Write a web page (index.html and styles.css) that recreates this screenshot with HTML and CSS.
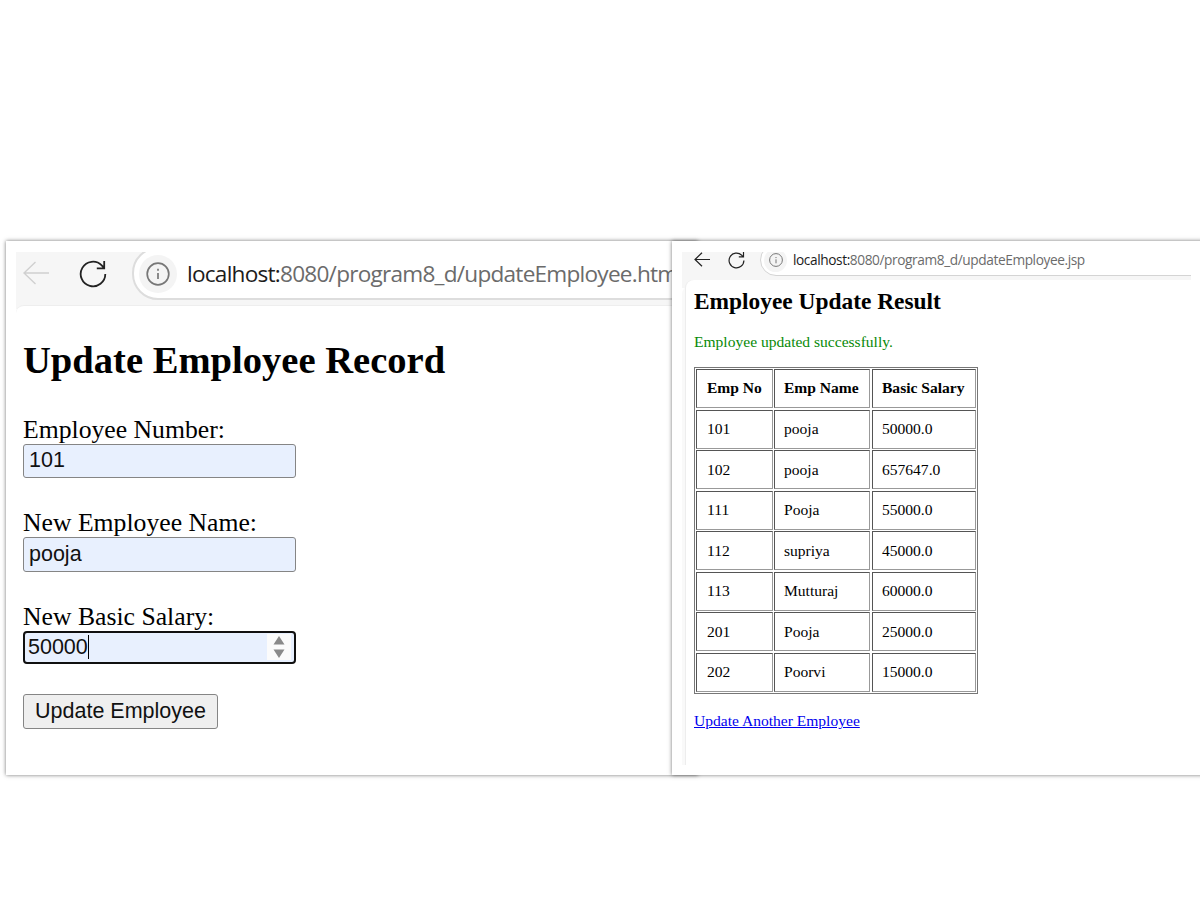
FILE: index.html
```html
<!DOCTYPE html>
<html lang="en">
<head>
<meta charset="utf-8">
<title>Update Employee</title>
<link rel="stylesheet" href="styles.css">
</head>
<body>
<main class="stage">
  <section class="window form-window">
    <header class="toolbar">
      <svg class="back" viewBox="0 0 26 24"><path d="M26 12H1M12.500 1 1 12l11.500 11"/></svg>
      <svg class="reload" viewBox="0 0 28 28"><path d="M26.300 14A12.300 12.300 0 1 1 22.700 5.300L25 7.900M25.200 1V8.300H17.800"/></svg>
      <div class="address">
        <span class="info"><svg viewBox="0 0 24 24"><circle cx="12" cy="12" r="10.800"/><path d="M12 11v6M12 6.800v2"/></svg></span>
        <span class="url"><b>localhost:</b>8080/program8_d/updateEmployee.html</span>
      </div>
    </header>
    <div class="page">
      <h2>Update Employee Record</h2>
      <form>
        <label>Employee Number:</label>
        <div class="field">101</div>
        <label>New Employee Name:</label>
        <div class="field name">pooja</div>
        <label>New Basic Salary:</label>
        <div class="field focused"><span class="typed">50000</span>
          <span class="spinner"><svg viewBox="0 0 12 22"><path d="M6 0 11.500 8.500H.5ZM.5 13.500h11L6 22Z"/></svg></span>
        </div>
        <button type="button">Update Employee</button>
      </form>
    </div>
  </section>
  <section class="window result-window">
    <header class="toolbar">
      <svg class="back" viewBox="0 0 16 15"><path d="M16 7.500H1M8 .7 1 7.500l7 6.800"/></svg>
      <svg class="reload" viewBox="0 0 17 17"><path d="M15.900 8.500A7.400 7.400 0 1 1 13.700 3.200L15.200 4.800M15.500 0V4.900H10.800"/></svg>
      <div class="address">
        <span class="info"><svg viewBox="0 0 14 14"><circle cx="7" cy="7" r="6.400"/><path d="M7 6.300v4M7 4v1.100"/></svg></span>
        <span class="url"><b>localhost:</b>8080/program8_d/updateEmployee.jsp</span>
      </div>
    </header>
    <div class="page">
      <h2>Employee Update Result</h2>
      <p class="success">Employee updated successfully.</p>
      <table>
        <tr><th>Emp No</th><th>Emp Name</th><th>Basic Salary</th></tr>
        <tr><td>101</td><td>pooja</td><td>50000.0</td></tr>
        <tr><td>102</td><td>pooja</td><td>657647.0</td></tr>
        <tr><td>111</td><td>Pooja</td><td>55000.0</td></tr>
        <tr><td>112</td><td>supriya</td><td>45000.0</td></tr>
        <tr><td>113</td><td>Mutturaj</td><td>60000.0</td></tr>
        <tr><td>201</td><td>Pooja</td><td>25000.0</td></tr>
        <tr><td>202</td><td>Poorvi</td><td>15000.0</td></tr>
      </table>
      <a href="#">Update Another Employee</a>
    </div>
  </section>
</main>
</body>
</html>
```
FILE: styles.css
```css
* { box-sizing: border-box; }
body { margin: 0; background: #fff; font-family: "Liberation Serif", serif; color: #000; }
.stage { display: flex; align-items: flex-start; width: 1200px; height: 900px; padding: 241px 0 0 6px; overflow: hidden; }
.window { flex: none; height: 534px; background: #fff; box-shadow: 0 0 4px rgba(0,0,0,.55); overflow: hidden; }
svg { display: block; flex: none; fill: none; stroke: #222; }
h2, p { margin: 0; white-space: nowrap; }
.toolbar { display: flex; overflow: hidden; background: #f6f6f6; }
.address { display: flex; align-items: center; background: #fff; flex: none; }
.info { display: flex; align-items: center; justify-content: center; border-radius: 50%; background: #f4f4f4; flex: none; }
.info svg { stroke: #777; }
.url { font-family: "Open Sans", sans-serif; color: #6b6b6b; white-space: nowrap; }
.url b { font-weight: 400; color: #1c1c1c; }

.form-window { width: 692px; margin-right: -26px; padding: 11px 0 0 10px; }
.form-window .toolbar { height: 57px; padding-left: 7px; }
.form-window .back { width: 26px; height: 24px; margin-top: 9px; stroke: #d0d0d0; stroke-width: 1.4; }
.form-window .reload { width: 28px; height: 28px; margin: 8px 0 0 30px; stroke-width: 1.8; }
.form-window .address { width: 620px; height: 53px; margin: -5px 0 0 25px; padding-left: 5px; border: 2px solid #ddd; border-radius: 26px; }
.form-window .info { width: 38px; height: 38px; }
.form-window .info svg { width: 24px; height: 24px; stroke-width: 1.7; }
.form-window .url { margin-left: 10px; margin-top: -1px; font-size: 22.600px; letter-spacing: -.76px; }
.form-window .page { position: relative; margin-top: -4px; padding: 32px 0 0 7px; background: #fff; border-top: 1px solid #eee; border-radius: 8px 0 0; }
.form-window h2 { font-size: 38.600px; line-height: 44px; }
form { display: flex; flex-direction: column; align-items: flex-start; padding-top: 33px; }
label { font-size: 25.700px; line-height: 29px; height: 29px; }
.field { display: flex; align-items: center; width: 273px; height: 34px; margin-bottom: 30px; padding: 0 0 1px 5px; border: 1.500px solid #858585; border-radius: 3px; background: #e8f0fe; font: 21.500px/1 "Liberation Sans", sans-serif; color: #111; }
.field.name { height: 35px; padding-bottom: 0; }
.field.focused { height: 33px; padding: 0 3px 1px 3px; border: 2.600px solid #101010; border-radius: 4px; justify-content: space-between; }
.typed { border-right: 1px solid #000; line-height: 24px; }
.spinner { display: flex; align-items: center; justify-content: center; width: 24px; height: 26px; background: #fbfbfb; }
.spinner svg { width: 12px; height: 22px; stroke: none; fill: #8a8a8a; }
button { width: 195px; height: 35px; padding: 1px 0 0; border: 1.500px solid #858585; border-radius: 3px; background: #efefef; font: 21.500px/1 "Liberation Sans", sans-serif; color: #111; white-space: nowrap; }

.result-window { position: relative; width: 540px; padding: 11px 21px 0 10px; }
.result-window .toolbar { height: 36px; padding-left: 12px; }
.result-window .back { width: 16px; height: 15px; stroke-width: 1.2; }
.result-window .reload { width: 17px; height: 17px; margin-left: 18px; stroke-width: 1.2; }
.result-window .address { width: 500px; height: 32px; margin: -8px 0 0 15px; padding-left: 3px; border: 1px solid #d4d4d4; border-radius: 16px; }
.result-window .info { width: 23px; height: 23px; }
.result-window .info svg { width: 14px; height: 14px; }
.result-window .url { margin-left: 6px; margin-top: -2px; font-size: 13.700px; line-height: 15px; letter-spacing: -.41px; }
.result-window .url b { line-height: 15px; }
.result-window .page { height: 485px; margin: -8px 0 0 4px; padding: 8px 0 0 8px; background: #fff; border-radius: 8px 0 0; box-shadow: -1px 0 0 #ededed, -4px 6px 0 #f9f9f9; clip-path: inset(0 0 0 -4px); }
.result-window h2 { font-size: 23.400px; line-height: 26px; }
.success { padding-top: 19px; font-size: 15.550px; line-height: 18px; color: #078a07; }
table { display: grid; grid-template-columns: 77px 97px 104px; grid-auto-rows: 38.980px; gap: 1.600px 1px; width: 284px; height: 327px; margin-top: 16px; padding: 1px; border: 1px solid #777; font-size: 15.550px; }
tbody, tr { display: contents; }
th, td { display: flex; align-items: center; padding: 0 0 0 10px; border: 1px solid; border-color: #555 #999 #999 #555; white-space: nowrap; }
th:nth-child(2), td:nth-child(2) { margin-right: 1px; padding-left: 9px; }
th:last-child, td:last-child { padding-left: 9px; }
a { display: inline-block; margin-top: 18px; font-size: 15.550px; line-height: 18px; color: #00e; }
```
